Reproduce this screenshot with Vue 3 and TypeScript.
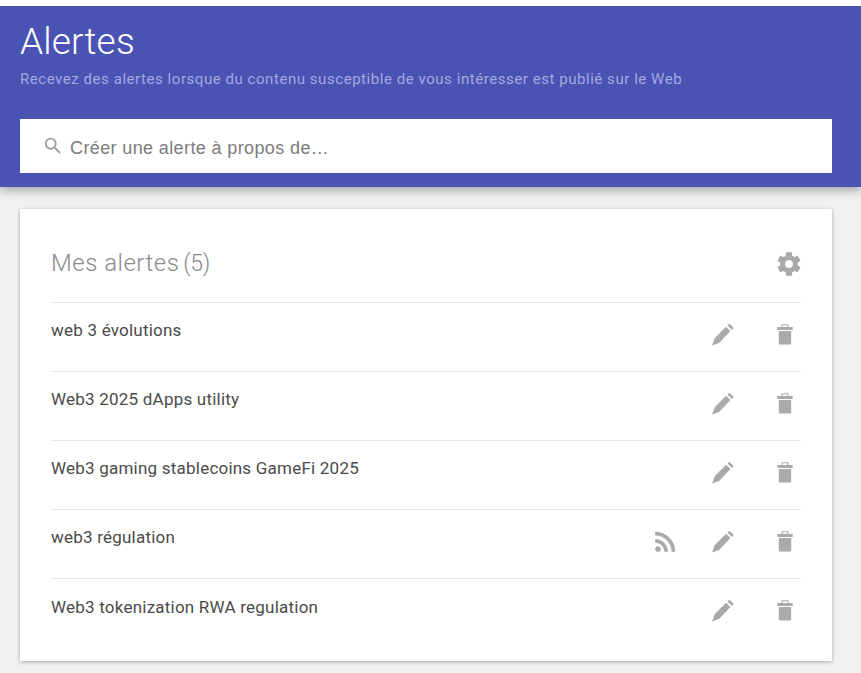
<template>
  <div class="page">
    <header class="header">
      <h1>Alertes</h1>
      <p>Recevez des alertes lorsque du contenu susceptible de vous intéresser est publié sur le Web</p>
      <div class="search">
        <svg class="search-icon" viewBox="0 0 24 24" width="22" height="22">
          <path d="M15.5 14h-.79l-.28-.27A6.47 6.47 0 0 0 16 9.5 6.500 6.500 0 1 0 9.500 16c1.610 0 3.090-.59 4.230-1.570l.27.28v.79l5 4.990L20.490 19l-4.990-5zm-6 0C7.010 14 5 11.990 5 9.500S7.010 5 9.500 5 14 7.010 14 9.500 11.990 14 9.500 14z" />
        </svg>
        <span class="search-text">Créer une alerte à propos de…</span>
      </div>
    </header>

    <section class="card">
      <div class="card-head">
        <h2>Mes alertes<span>(5)</span></h2>
        <svg class="icon gear" viewBox="0 0 24 24" width="28" height="28">
          <path d="M19.43 12.98c.04-.32.07-.64.07-.98s-.03-.66-.07-.98l2.110-1.650c.19-.15.24-.42.12-.64l-2-3.460c-.12-.22-.39-.3-.61-.22l-2.490 1c-.52-.4-1.080-.73-1.690-.98l-.38-2.650A.49.49 0 0 0 14 2h-4c-.25 0-.46.18-.49.42l-.38 2.650c-.61.25-1.170.59-1.690.98l-2.490-1c-.23-.09-.49 0-.61.22l-2 3.460c-.13.22-.07.49.12.64l2.110 1.650c-.04.32-.07.65-.07.98s.03.66.07.98l-2.110 1.650c-.19.15-.24.42-.12.64l2 3.460c.12.22.39.3.61.22l2.490-1c.52.4 1.080.73 1.690.98l.38 2.650c.03.24.24.42.49.42h4c.25 0 .46-.18.49-.42l.38-2.650c.61-.25 1.170-.59 1.690-.98l2.490 1c.23.09.49 0 .61-.22l2-3.460c.12-.22.07-.49-.12-.64l-2.110-1.650zM12 15.500c-1.930 0-3.500-1.570-3.500-3.500s1.570-3.500 3.500-3.500 3.500 1.570 3.500 3.500-1.570 3.500-3.500 3.500z" />
        </svg>
      </div>
      <ul class="alerts">
        <li v-for="alert in alerts" :key="alert.name" class="alert">
          <span class="name">{{ alert.name }}</span>
          <svg v-if="alert.rss" class="icon rss" viewBox="0 0 24 24" width="31" height="31">
            <circle cx="6.180" cy="17.820" r="2.180" />
            <path d="M4 4.440v2.830c7.030 0 12.730 5.700 12.730 12.730h2.830c0-8.590-6.970-15.560-15.560-15.560zm0 5.660v2.830c3.900 0 7.070 3.170 7.070 7.070h2.830c0-5.470-4.430-9.900-9.900-9.900z" />
          </svg>
          <svg class="icon edit" viewBox="0 0 24 24" width="26" height="26">
            <path d="M2.800 21.800L5.200 15 15.800 4.400l4 4L9.300 19.400zM17 3.200l1-1c.5-.4 1.100-.4 1.600 0l2.600 2.600c.4.500.4 1.100 0 1.600l-1 1z" />
          </svg>
          <svg class="icon trash" viewBox="0 0 24 24" width="28" height="28">
            <path d="M6.700 8.600h10.600v10.700c0 .5-.4.9-.9.900H7.600c-.5 0-.9-.4-.9-.9zM5.400 5.200h13.200v2.500H5.400zM9 5.200V2.800h6v2.400h-1V3.700h-4v1.500z" />
          </svg>
        </li>
      </ul>
    </section>
  </div>
</template>

<script setup lang="ts">
interface Alert {
  name: string
  rss?: boolean
}

const alerts: Alert[] = [
  { name: 'web 3 évolutions' },
  { name: 'Web3 2025 dApps utility' },
  { name: 'Web3 gaming stablecoins GameFi 2025' },
  { name: 'web3 régulation', rss: true },
  { name: 'Web3 tokenization RWA regulation' },
]
</script>

<style>
html,
body {
  margin: 0;
  background: #f1f1f1;
}
</style>

<style scoped>
.page {
  height: 673px;
  overflow: hidden;
  border-top: 6px solid #fff;
  box-sizing: border-box;
  background: #f1f1f1;
  font-family: Roboto, sans-serif;
}

.header {
  height: 181px;
  padding: 1px 29px 0 20px;
  box-sizing: border-box;
  background: #4a53b3;
  box-shadow: 0 3px 10px rgba(0, 0, 0, 0.35);
}

h1 {
  margin: 14px 0 0;
  font-size: 37px;
  line-height: 42px;
  font-weight: 300;
  letter-spacing: 0.15px;
  color: #fff;
}

.header p {
  margin: 6px 0 0;
  font-size: 15px;
  line-height: 20px;
  letter-spacing: 0.55px;
  color: #a4a9e0;
}

.search {
  display: flex;
  align-items: center;
  gap: 6px;
  height: 54px;
  margin-top: 30px;
  padding-left: 22px;
  background: #fff;
  font-family: 'Liberation Sans', Arial, sans-serif;
  font-size: 18px;
  letter-spacing: 0.38px;
  color: #7b7b7b;
}

.search-text {
  padding-top: 5px;
}

.search-icon {
  fill: #9e9e9e;
}

.card {
  margin: 22px 29px 0 20px;
  padding: 0 31px 13px;
  background: #fff;
  box-shadow: 0 1px 4px rgba(0, 0, 0, 0.3);
}

.card-head {
  display: flex;
  align-items: center;
  justify-content: space-between;
  height: 94px;
  padding-top: 16px;
  box-sizing: border-box;
  border-bottom: 1px solid #e6e6e6;
}

h2 {
  margin: 0 0 2px;
  font-size: 24px;
  font-weight: 300;
  letter-spacing: 0.5px;
  color: #8a8a8a;
}

h2 span {
  margin-left: 4px;
  font-size: 23px;
  letter-spacing: -0.3px;
}

.icon {
  fill: #aaa;
  flex: none;
  margin-bottom: 5px;
}

.gear {
  margin: 1px -2px 0 0;
}

.alerts {
  margin: 0;
  padding: 0;
  list-style: none;
}

.alert {
  display: flex;
  align-items: center;
  height: 69px;
  padding-right: 2px;
  box-sizing: border-box;
  border-bottom: 1px solid #e6e6e6;
}

.alert:last-child {
  border-bottom: 0;
}

.name {
  flex: 1;
  margin-bottom: 14px;
  font-size: 17px;
  letter-spacing: 0.22px;
  color: #4a4a4a;
}

.edit {
  margin-left: 28px;
}

.trash {
  margin-left: 36px;
}
</style>
